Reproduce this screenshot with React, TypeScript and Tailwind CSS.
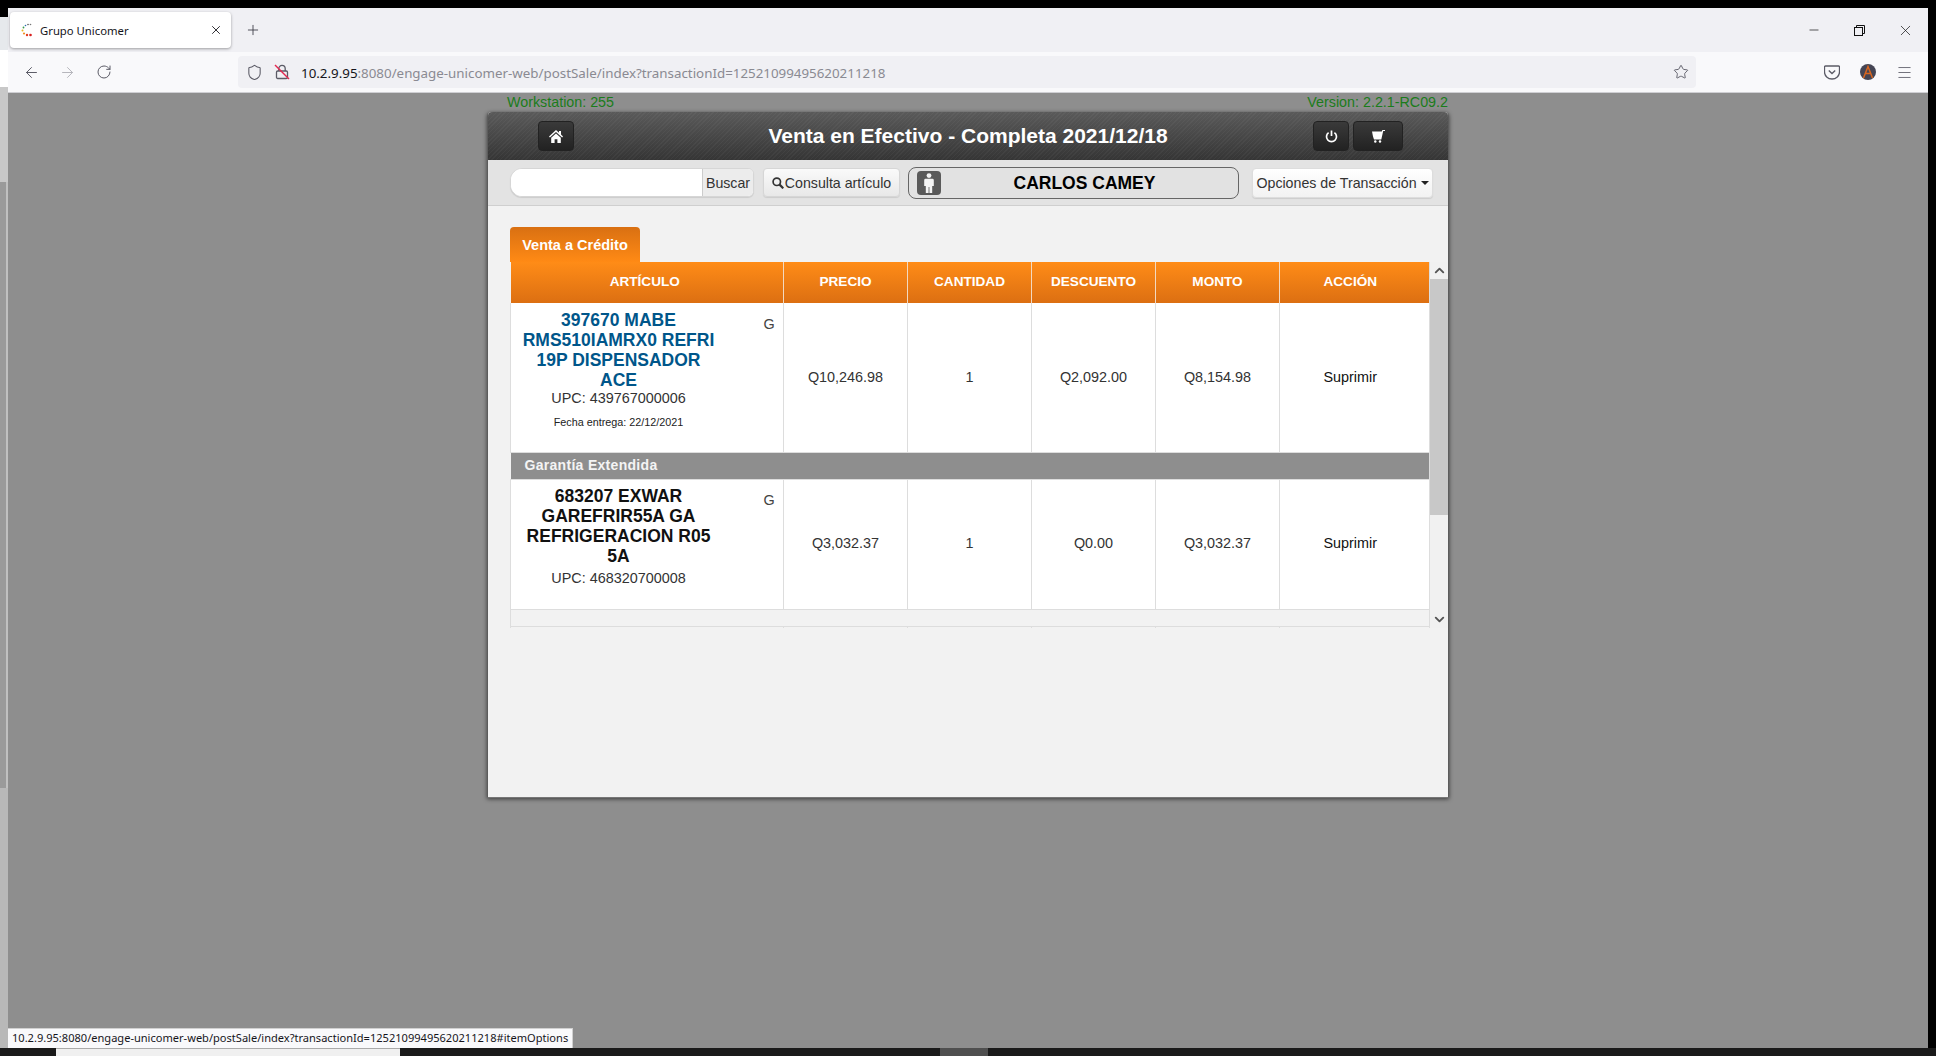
import { Fragment } from "react";
import { ArrowLeft, ArrowRight, RotateCw, Plus, X, Minus, Star, Menu, Shield, ChevronUp, ChevronDown } from "lucide-react";

const rows = [
  {
    name: ["397670 MABE", "RMS510IAMRX0 REFRI", "19P DISPENSADOR", "ACE"],
    upc: "UPC: 439767000006",
    fecha: "Fecha entrega: 22/12/2021",
    precio: "Q10,246.98",
    descuento: "Q2,092.00",
    monto: "Q8,154.98",
  },
  {
    name: ["683207 EXWAR", "GAREFRIR55A GA", "REFRIGERACION R05", "5A"],
    upc: "UPC: 468320700008",
    precio: "Q3,032.37",
    descuento: "Q0.00",
    monto: "Q3,032.37",
  },
];

function Favicon() {
  return (
    <svg width="16" height="16" viewBox="0 0 16 16" className="shrink-0">
      <circle cx="9" cy="2.5" r="0.8" fill="#555" />
      <circle cx="11.5" cy="2.5" r="0.8" fill="#777" />
      <circle cx="6.5" cy="3.5" r="0.8" fill="#2a6fb0" />
      <circle cx="4.5" cy="5.5" r="0.9" fill="#3a9a4a" />
      <circle cx="3.5" cy="8.5" r="1" fill="#e8b820" />
      <circle cx="5" cy="11.5" r="1.1" fill="#f09020" />
      <circle cx="8" cy="13" r="1.2" fill="#e23b20" />
      <circle cx="11.5" cy="13" r="1.3" fill="#d81e1e" />
    </svg>
  );
}

function InsecureLock() {
  return (
    <svg width="16" height="16" viewBox="0 0 16 16" fill="none" className="shrink-0">
      <rect x="2.5" y="7" width="11" height="7.5" rx="1.2" stroke="#5b5b66" strokeWidth="1.3" />
      <path d="M4.8 7V4.6a3.2 3.2 0 0 1 6.4 0V7" stroke="#5b5b66" strokeWidth="1.3" />
      <path d="M1 1l14 14" stroke="#e22850" strokeWidth="1.4" />
    </svg>
  );
}

function Pocket() {
  return (
    <svg width="16" height="15" viewBox="0 0 16 15" fill="none">
      <path d="M1.5 1h13a1 1 0 0 1 1 1v5a7.5 7 0 0 1-15 0V2a1 1 0 0 1 1-1z" stroke="#5b5b66" strokeWidth="1.3" />
      <path d="M4.8 5.5L8 8.5l3.2-3" stroke="#5b5b66" strokeWidth="1.4" />
    </svg>
  );
}

function Avatar() {
  return (
    <svg width="16" height="16" viewBox="0 0 16 16">
      <circle cx="8" cy="8" r="8" fill="#454554" />
      <path d="M3.5 14L8 2.5 12.5 14M5.5 9.5h5" fill="none" stroke="#d9661f" strokeWidth="1.5" />
    </svg>
  );
}

function RestoreIcon() {
  return (
    <svg width="11" height="11" viewBox="0 0 11 11" fill="none" stroke="#111" strokeWidth="1" className="ml-[33px]">
      <rect x="0.5" y="2.5" width="8" height="8" />
      <path d="M2.5 2.5V0.5h8v8H8.5" />
    </svg>
  );
}

function HomeIcon() {
  return (
    <svg width="14" height="13" viewBox="0 0 14 13" fill="#fff">
      <path d="M7 0L0 6.4l.9 1L7 2l6.1 5.4.9-1-2-1.8V1h-2v1.8z" />
      <path d="M2.2 7.8L7 3.5l4.8 4.3V13H8.4V9.2H5.6V13H2.2z" />
    </svg>
  );
}

function PowerIcon() {
  return (
    <svg width="13" height="13" viewBox="0 0 13 13" fill="none" stroke="#fff" strokeWidth="1.7">
      <path d="M3.6 2.6a5 5 0 1 0 5.8 0" />
      <path d="M6.5 0.5v5.5" />
    </svg>
  );
}

function CartIcon() {
  return (
    <svg width="13" height="13" viewBox="0 0 13 13" fill="#fff">
      <path d="M0 1.5h9.8L10.4 0H13v1h-1.8L9.3 9.5H2L1 6.5z" />
      <circle cx="3.3" cy="11.5" r="1.2" />
      <circle cx="8" cy="11.5" r="1.2" />
    </svg>
  );
}

function SearchIcon() {
  return (
    <svg width="12" height="12" viewBox="0 0 12 12" fill="none" stroke="#333" strokeWidth="1.7">
      <circle cx="4.8" cy="4.8" r="3.7" />
      <path d="M7.6 7.6L11.3 11.3" strokeWidth="2.2" />
    </svg>
  );
}

function PersonIcon() {
  return (
    <svg width="10" height="20" viewBox="0 0 10 20" fill="#f4f4f4">
      <circle cx="5" cy="2.6" r="2.4" />
      <path d="M1.6 5.8h6.8a1.4 1.4 0 0 1 1.4 1.4V13H8.2v7H5.4v-6H4.6v6H1.8v-7H.2V7.2a1.4 1.4 0 0 1 1.4-1.4z" />
    </svg>
  );
}

export default function App() {
  return (
    <div className="w-[1936px] h-[1056px] flex flex-col overflow-hidden bg-black font-['Liberation_Sans',Arial,sans-serif]">
      <div className="h-2 bg-black shrink-0" />
      <div className="flex-1 flex min-h-0">
        {/* window behind the browser */}
        <div className="w-2 flex flex-col shrink-0">
          <div className="h-[9px] bg-black" />
          <div className="h-[33px] bg-[#e6e9ec]" />
          <div className="h-[37px] bg-white" />
          <div className="h-[95px] bg-[#c8c8c8]" />
          <div className="h-[606px] bg-[#9a9a9a] border-r-2 border-r-[#c0c0c0]" />
          <div className="flex-1 bg-[#b8b8b8]" />
        </div>

        <div className="flex-1 flex flex-col relative min-w-0">
          {/* tab strip */}
          <div className="h-11 bg-[#f0f0f4] flex items-center shrink-0 pl-0.5">
            <div className="w-[221px] h-9 bg-white rounded shadow-[0_1px_3px_rgba(0,0,0,0.35)] flex items-center pl-[9px] pr-2 font-['Noto_Sans',sans-serif] text-[11.3px] text-[#15141a]">
              <Favicon />
              <span className="ml-[5px] flex-1 pt-[2px]">Grupo Unicomer</span>
              <X size={14} strokeWidth={1.5} color="#15141a" />
            </div>
            <Plus size={16} strokeWidth={1.3} color="#3a3a44" className="ml-[14px]" />
            <div className="flex-1" />
            <div className="flex items-center pr-[14px]">
              <Minus size={14} strokeWidth={1.2} color="#111" />
              <RestoreIcon />
              <X size={17} strokeWidth={1} color="#111" className="ml-[32px]" />
            </div>
          </div>

          {/* nav bar */}
          <div className="h-[41px] bg-[#f9f9fb] border-b border-b-[#cfcfd3] flex items-center shrink-0 pl-[15px]">
            <ArrowLeft size={17} strokeWidth={1.4} color="#5b5b66" />
            <ArrowRight size={17} strokeWidth={1.4} color="#b5b5bb" className="ml-[19px]" />
            <RotateCw size={16} strokeWidth={1.5} color="#5b5b66" className="ml-[20px]" />
            <div className="ml-[126px] w-[1458px] h-8 bg-[#f0f0f4] rounded flex items-center pl-2 pr-[7px] font-['Noto_Sans',sans-serif] text-[13.35px]">
              <Shield size={17} strokeWidth={1.5} color="#5b5b66" className="shrink-0" />
              <span className="ml-[11px]"><InsecureLock /></span>
              <span className="ml-[11px] text-[#15141a] pt-[2px]">10.2.9.95</span>
              <span className="text-[#8a8a92] pt-[2px]">:8080/engage-unicomer-web/postSale/index?transactionId=12521099495620211218</span>
              <div className="flex-1" />
              <Star size={16} strokeWidth={1.4} color="#5b5b66" />
            </div>
            <div className="ml-[128px] flex items-center gap-[20px]">
              <Pocket />
              <Avatar />
              <Menu size={17} strokeWidth={1.2} color="#5b5b66" />
            </div>
          </div>

          {/* page */}
          <div className="flex-1 bg-[#8e8e8e] min-h-0">
            <div className="w-[960px] mx-auto">
              <div className="h-[19px] flex justify-between items-center pl-[19px] text-[14.3px] text-[#1b7c1b]">
                <span>Workstation: 255</span>
                <span>Version: 2.2.1-RC09.2</span>
              </div>

              <div className="h-[686px] bg-[#f2f2f2] rounded-t shadow-[0_1px_4px_rgba(0,0,0,0.6)] border-x border-x-[#5c5c5c] border-b border-b-[#777] flex flex-col -ml-px w-[962px]">
                {/* header */}
                <div className="h-12 shrink-0 rounded-t flex items-center pl-[50px] pr-[45px] bg-[repeating-linear-gradient(135deg,rgba(255,255,255,0.035)_0px,rgba(255,255,255,0.035)_1px,transparent_1px,transparent_3px),linear-gradient(#5a5a5a,#353535)]">
                  <button className="w-9 h-[30px] rounded bg-[linear-gradient(#3a3a3a,#222)] border border-[#222] flex items-center justify-center">
                    <HomeIcon />
                  </button>
                  <h1 className="flex-1 text-center text-[21px] font-bold text-white pl-[49px]">Venta en Efectivo - Completa 2021/12/18</h1>
                  <div className="flex gap-1">
                    <button className="w-9 h-[30px] rounded bg-[linear-gradient(#3a3a3a,#222)] border border-[#222] flex items-center justify-center">
                      <PowerIcon />
                    </button>
                    <button className="w-[50px] h-[30px] rounded bg-[linear-gradient(#3a3a3a,#222)] border border-[#222] flex items-center justify-center">
                      <CartIcon />
                    </button>
                  </div>
                </div>

                {/* toolbar */}
                <div className="h-[46px] shrink-0 bg-[#e3e3e3] border-b border-b-[#cfcfcf] flex items-center pl-[22px] text-[14.2px] text-[#333]">
                  <div className="w-[244px] h-[29px] flex rounded-l-xl rounded-r-md border border-[#d6d6d6] bg-white overflow-hidden shadow-[0_1px_1px_rgba(0,0,0,0.1)]">
                    <input className="w-[191px] bg-white outline-none" />
                    <button className="flex-1 border-l border-l-[#ccc] bg-[#ececec] text-center pt-[2px]">Buscar</button>
                  </div>
                  <button className="ml-[9px] w-[137px] h-[29px] rounded border border-[#d6d6d6] bg-[linear-gradient(#fafafa,#e8e8e8)] flex items-center justify-center gap-px shadow-[0_1px_1px_rgba(0,0,0,0.1)]">
                    <SearchIcon />
                    <span className="pt-[2px]">Consulta artículo</span>
                  </button>
                  <div className="ml-2 w-[331px] h-[32px] rounded-lg border border-[#666] bg-[#e2e2e2] flex items-center pl-2">
                    <div className="w-6 h-6 rounded bg-[#5a5a5a] flex items-center justify-center shrink-0">
                      <PersonIcon />
                    </div>
                    <span className="flex-1 text-center text-[17.5px] font-bold text-black pr-[10px] pt-[2px]">CARLOS CAMEY</span>
                  </div>
                  <button className="ml-[13px] w-[181px] h-[30px] rounded border border-[#ddd] bg-[linear-gradient(#fff,#f2f2f2)] flex items-center justify-center gap-1 shadow-[0_1px_1px_rgba(0,0,0,0.1)]">
                    <span className="pt-[2px]">Opciones de Transacción</span>
                    <span className="w-0 h-0 border-x-4 border-x-transparent border-t-4 border-t-[#222]" />
                  </button>
                </div>

                {/* content */}
                <div className="flex-1 pl-[22px] pt-[21px]">
                  <div className="w-[130px] h-[35px] rounded-t bg-[linear-gradient(#d97012,#ff8a15)] flex items-center justify-center text-[14.5px] font-bold text-white pt-[2px]">
                    Venta a Crédito
                  </div>
                  <div className="flex h-[366px] w-[938px]">
                    <div className="w-[920px] h-full overflow-hidden border-r border-r-[#ddd]">
                      <table className="w-[920px] table-fixed border-collapse text-[14.4px] text-[#333]">
                        <colgroup>
                          <col className="w-[273px]" />
                          <col className="w-[124px]" />
                          <col className="w-[124px]" />
                          <col className="w-[124px]" />
                          <col className="w-[124px]" />
                          <col className="w-[151px]" />
                        </colgroup>
                        <thead>
                          <tr className="h-[41px] bg-[linear-gradient(#ff8c17,#dc6f12)] text-white">
                            {["ARTÍCULO", "PRECIO", "CANTIDAD", "DESCUENTO", "MONTO", "ACCIÓN"].map((h) => (
                              <th key={h} className="border-x border-x-[#f3d9c0] first:border-l-0 first:pr-1 last:border-r-0 last:pr-[10px] text-center text-[13.6px] font-bold p-0">{h}</th>
                            ))}
                          </tr>
                        </thead>
                        <tbody>
                          {rows.map((r, i) => {
                            const cell = i === 0 ? "border-l border-l-[#ddd] text-center p-0 pt-[2px]" : "border-l border-l-[#ddd] text-center p-0";
                            return (
                              <Fragment key={r.upc}>
                                {i === 1 && (
                                  <tr className="h-[27px] bg-[#8e8e8e] border-y border-y-[#ddd]">
                                    <td colSpan={6} className="pl-[14px] text-[14px] tracking-[0.3px] font-bold text-[#f4f4f4] p-0">Garantía Extendida</td>
                                  </tr>
                                )}
                                <tr className={i === 0 ? "h-[149px] bg-white" : "h-[130px] bg-white"}>
                                  <td className="border-l border-l-[#ddd] p-0 align-top">
                                    <div className={i === 0 ? "flex pt-[7px]" : "flex pt-[6px]"}>
                                      <div className="w-[215px] text-center">
                                        <div className={i === 0 ? "text-[17.5px] leading-5 font-bold text-[#00568a]" : "text-[17.5px] leading-5 font-bold text-[#111]"}>
                                          {r.name.map((l) => (
                                            <div key={l}>{l}</div>
                                          ))}
                                        </div>
                                        <div className={i === 0 ? "leading-5 -mt-[2px]" : "leading-5 mt-0.5"}>{r.upc}</div>
                                        {r.fecha && <div className="text-[10.8px] text-[#222] mt-[6px] leading-4">{r.fecha}</div>}
                                      </div>
                                      <div className="flex-1 text-center text-[#444] leading-5 pt-[4px] pl-[29px]">G</div>
                                    </div>
                                  </td>
                                  <td className={cell}>{r.precio}</td>
                                  <td className={cell}>1</td>
                                  <td className={cell}>{r.descuento}</td>
                                  <td className={cell}>{r.monto}</td>
                                  <td className={cell + " pr-[10px] text-[#111]"}>Suprimir</td>
                                </tr>
                              </Fragment>
                            );
                          })}
                          <tr className="h-[17px] border-y border-y-[#ddd]">
                            <td colSpan={6} className="border-l border-l-[#ddd] p-0" />
                          </tr>
                          <tr className="h-[4px]">
                            <td className="border-l border-l-[#ddd] p-0" />
                            <td className="border-l border-l-[#ddd] p-0" />
                            <td className="border-l border-l-[#ddd] p-0" />
                            <td className="border-l border-l-[#ddd] p-0" />
                            <td className="border-l border-l-[#ddd] p-0" />
                            <td className="border-l border-l-[#ddd] p-0" />
                          </tr>
                        </tbody>
                      </table>
                    </div>
                    {/* scrollbar */}
                    <div className="w-[18px] h-full bg-[#f1f1f1] flex flex-col">
                      <div className="h-[17px] flex items-center justify-center shrink-0">
                        <ChevronUp size={15} strokeWidth={3} color="#555" />
                      </div>
                      <div className="h-[236px] bg-[#c8c8c8] shrink-0" />
                      <div className="flex-1" />
                      <div className="h-[17px] flex items-center justify-center shrink-0">
                        <ChevronDown size={15} strokeWidth={3} color="#555" />
                      </div>
                    </div>
                  </div>
                </div>
              </div>
            </div>
          </div>

          {/* link status overlay */}
          <div className="absolute left-0 bottom-0 w-[565px] h-5 bg-[#f9f9fb] border-t border-r border-[#d0d0d0] pl-[4px] flex items-center font-['Noto_Sans',sans-serif] text-[11.07px] text-[#15141a] whitespace-nowrap">
            10.2.9.95:8080/engage-unicomer-web/postSale/index?transactionId=12521099495620211218#itemOptions
          </div>
        </div>

        <div className="w-2 bg-black shrink-0" />
      </div>

      {/* taskbar */}
      <div className="h-2 shrink-0 bg-[#1a1a1a] flex overflow-hidden">
        <div className="w-[56px] shrink-0" />
        <div className="w-[344px] bg-[#f0f0f0] border-t border-t-[#aaa] shrink-0" />
        <div className="w-[540px] shrink-0" />
        <div className="w-12 bg-[#4f4f4f] shrink-0" />
      </div>
    </div>
  );
}
